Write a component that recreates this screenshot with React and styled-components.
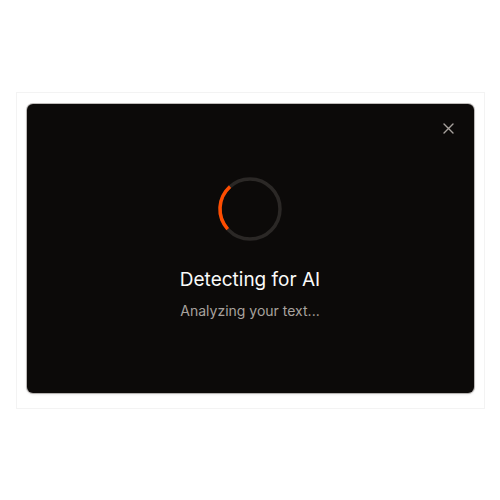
import React from "react";
import styled, { createGlobalStyle } from "styled-components";

const Global = createGlobalStyle`
  html, body { margin: 0; padding: 0; background: #ffffff; }
  body { font-family: Inter, "Noto Sans", sans-serif; }
`;

const Page = styled.div`
  min-height: 100vh;
  display: flex;
  align-items: center;
  justify-content: center;
`;

const Frame = styled.div`
  box-sizing: border-box;
  width: 469px;
  height: 317px;
  border: 1px solid #f3f3f3;
  padding: 11px 10px 15px 10px;
  display: flex;
`;

const Modal = styled.div`
  position: relative;
  flex: 1;
  background: #0c0a09;
  border-radius: 6px;
  box-shadow: 0 0 0 1px rgba(120, 113, 108, 0.45), 0 1px 3px rgba(0, 0, 0, 0.15);
  display: flex;
  flex-direction: column;
  align-items: center;
  justify-content: center;
  padding-top: 0;
`;

const Close = styled.button`
  position: absolute;
  top: 18px;
  right: 18px;
  width: 14px;
  height: 14px;
  padding: 0;
  border: 0;
  background: transparent;
  display: flex;
  align-items: center;
  justify-content: center;
  color: #a8a29e;
  cursor: pointer;
`;

const Spinner = styled.svg`
  width: 68px;
  height: 68px;
  display: block;
`;

const Title = styled.h2`
  margin: 25px 0 0 0;
  font-size: 19px;
  font-weight: 400;
  color: #fafaf9;
  line-height: 24px;
  letter-spacing: 0;
`;

const Subtitle = styled.p`
  margin: 9px 0 0 0;
  font-size: 14px;
  line-height: 20px;
  color: #a8a29e;
`;

export default function App() {
  const r = 30;
  const c = 2 * Math.PI * r;
  return (
    <Page>
      <Global />
      <Frame>
        <Modal>
          <Close aria-label="Close">
            <svg width="11" height="11" viewBox="0 0 11 11" fill="none">
              <path d="M1 1 L10 10 M10 1 L1 10" stroke="currentColor" strokeWidth="1.4" strokeLinecap="round" />
            </svg>
          </Close>
          <Spinner viewBox="0 0 68 68">
            <circle cx="34" cy="34" r={r} fill="none" stroke="#2b2826" strokeWidth="3.5" />
            <circle
              cx="34"
              cy="34"
              r={r}
              fill="none"
              stroke="#ff4d00"
              strokeWidth="3.5"
              strokeDasharray={`${c * 0.25} ${c}`}
              transform="rotate(138 34 34)"
            />
          </Spinner>
          <Title>Detecting for AI</Title>
          <Subtitle>Analyzing your text...</Subtitle>
        </Modal>
      </Frame>
    </Page>
  );
}
